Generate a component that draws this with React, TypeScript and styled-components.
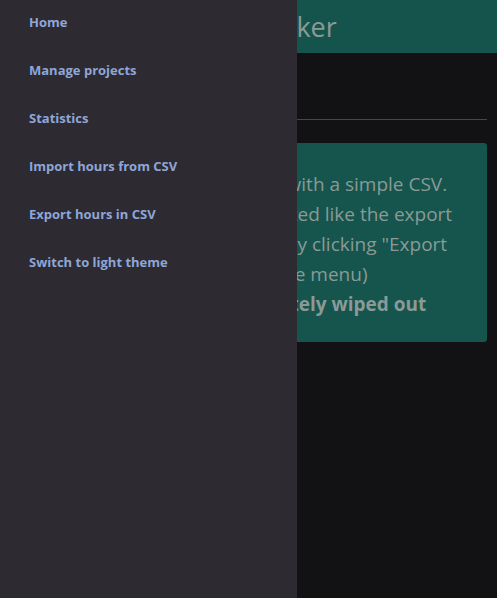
import React from "react";
import styled, { createGlobalStyle } from "styled-components";

const GlobalStyle = createGlobalStyle`
  html, body {
    margin: 0;
    padding: 0;
    background: #121214;
  }
  body {
    font-family: "Open Sans", "Noto Sans", sans-serif;
    overflow: hidden;
  }
`;

const Page = styled.div`
  min-height: 100vh;
  background: #121214;
  display: flex;
  flex-direction: column;
`;

const Header = styled.header`
  height: 53px;
  background: #14544c;
  display: flex;
  align-items: center;
  justify-content: center;
`;

const Title = styled.h1`
  margin: 0 0 0 4px;
  font-size: 27px;
  font-weight: 400;
  color: #8a9a96;
  line-height: 53px;
`;

const Main = styled.main`
  padding: 0 10px;
  display: flex;
  flex-direction: column;
`;

const Toolbar = styled.div`
  height: 66px;
  border-bottom: 1px solid #47474a;
`;

const Card = styled.section`
  margin-top: 23px;
  background: #15554d;
  border-radius: 3px;
  padding: 26px 20px 23px 35px;
`;

const Line = styled.span<{ $bold?: boolean }>`
  display: block;
  white-space: nowrap;
  font-size: 19px;
  line-height: 30px;
  color: #8a9a96;
  font-weight: ${(p) => (p.$bold ? 700 : 400)};
`;

const Drawer = styled.nav`
  position: fixed;
  top: 0;
  left: 0;
  bottom: 0;
  width: 297px;
  background: #2d2b31;
  padding-top: 10px;
  box-sizing: border-box;
`;

const MenuList = styled.ul`
  list-style: none;
  margin: 0;
  padding: 0;
  display: flex;
  flex-direction: column;
  gap: 24px;
`;

const MenuItem = styled.li`
  padding-left: 29px;
  font-size: 13px;
  font-weight: 700;
  line-height: 24px;
  color: #8ea6d8;
  cursor: pointer;
`;

const menu = [
  "Home",
  "Manage projects",
  "Statistics",
  "Import hours from CSV",
  "Export hours in CSV",
  "Switch to light theme",
];

export default function App() {
  return (
    <>
      <GlobalStyle />
      <Page>
        <Header>
          <Title>Hours tracker</Title>
        </Header>
        <Main>
          <Toolbar />
          <Card>
            <Line>You can import your hours with a simple CSV.</Line>
            <Line>The CSV file must be formatted like the export</Line>
            <Line>(you can grab a sample file by clicking "Export</Line>
            <Line>hours in CSV" item in the side menu)</Line>
            <Line $bold>Your hours will be completely wiped out</Line>
          </Card>
        </Main>
      </Page>
      <Drawer>
        <MenuList>
          {menu.map((m) => (
            <MenuItem key={m}>{m}</MenuItem>
          ))}
        </MenuList>
      </Drawer>
    </>
  );
}
